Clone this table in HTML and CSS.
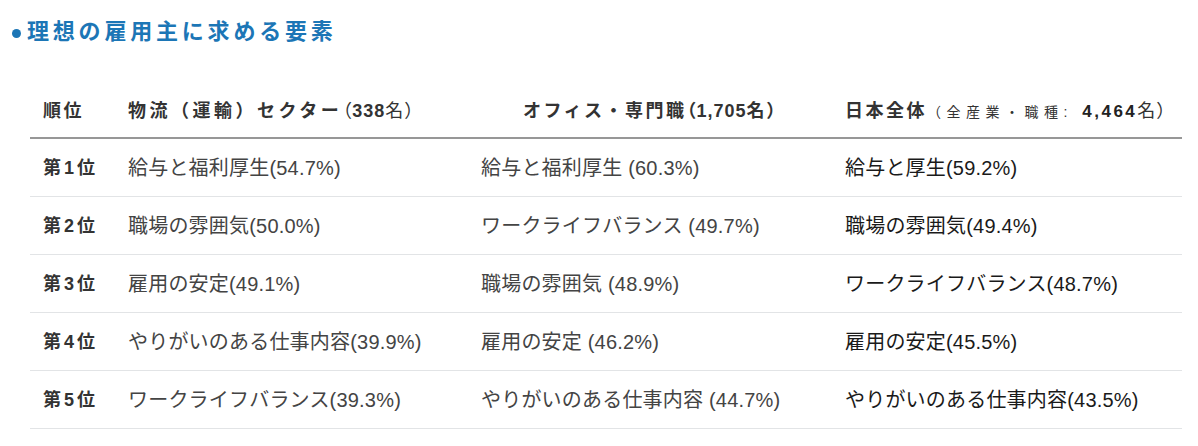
FILE: index.html
```html
<!DOCTYPE html>
<html lang="ja">
<head>
<meta charset="utf-8">
<title>理想の雇用主に求める要素</title>
<link rel="stylesheet" href="styles.css">
</head>
<body>
<div class="page">
  <h2 class="title"><span class="dot"></span>理想の雇用主に求める要素</h2>
  <div class="table">
    <div class="row head">
      <div class="cell">順位</div>
      <div class="cell wide">物流（運輸）セクター<span class="open thin">（</span><b class="n1">338</b><span class="thin">名）</span></div>
      <div class="cell center">オフィス・専門職<span class="open">（</span><b class="n2">1,705</b>名<span class="close">）</span></div>
      <div class="cell">日本全体<span class="small">（全産業・職種: </span><b class="n3">4,464</b><span class="thin">名）</span></div>
    </div>
    <div class="row">
      <div class="cell rank">第<span class="num">1</span>位</div>
      <div class="cell c1">給与と福利厚生(54.7%)</div>
      <div class="cell c2">給与と福利厚生 (60.3%)</div>
      <div class="cell c3">給与と厚生(59.2%)</div>
    </div>
    <div class="row">
      <div class="cell rank">第<span class="num">2</span>位</div>
      <div class="cell c1">職場の雰囲気(50.0%)</div>
      <div class="cell c2">ワークライフバランス (49.7%)</div>
      <div class="cell c3">職場の雰囲気(49.4%)</div>
    </div>
    <div class="row">
      <div class="cell rank">第<span class="num">3</span>位</div>
      <div class="cell c1">雇用の安定(49.1%)</div>
      <div class="cell c2">職場の雰囲気 (48.9%)</div>
      <div class="cell c3">ワークライフバランス(48.7%)</div>
    </div>
    <div class="row">
      <div class="cell rank">第<span class="num">4</span>位</div>
      <div class="cell c1">やりがいのある仕事内容(39.9%)</div>
      <div class="cell c2">雇用の安定 (46.2%)</div>
      <div class="cell c3">雇用の安定(45.5%)</div>
    </div>
    <div class="row">
      <div class="cell rank">第<span class="num">5</span>位</div>
      <div class="cell c1">ワークライフバランス(39.3%)</div>
      <div class="cell c2">やりがいのある仕事内容 (44.7%)</div>
      <div class="cell c3">やりがいのある仕事内容(43.5%)</div>
    </div>
  </div>
</div>
</body>
</html>
```

FILE: styles.css
```css
* { box-sizing: border-box; }
html, body {
  margin: 0;
  padding: 0;
  background: #fff;
}
body {
  font-family: "Liberation Sans", Arial, "Noto Sans CJK JP", sans-serif;
  color: #333;
}
.page {
  width: 1198px;
  height: 446px;
  overflow: hidden;
  padding-top: 17px;
}
.title {
  margin: 0 0 0 12px;
  display: flex;
  align-items: center;
  font-size: 22px;
  line-height: 30px;
  font-weight: bold;
  letter-spacing: 3.8px;
  color: #1c76b6;
}
.dot {
  width: 9px;
  height: 9px;
  border-radius: 50%;
  background: #1c76b6;
  margin-right: 6px;
  margin-top: 3px;
}
.table {
  margin: 34px 0 0 30px;
  width: 1152px;
}
.row {
  display: grid;
  grid-template-columns: 85px 353px 364px 350px;
  height: 58px;
  align-items: center;
  border-bottom: 1px solid #e2e4e6;
}
.row.head {
  border-bottom: 2px solid #979797;
  font-size: 18px;
  font-weight: bold;
  letter-spacing: 2.5px;
  color: #333;
  padding-top: 4px;
}
.cell {
  padding-left: 13px;
  white-space: nowrap;
  line-height: 24px;
}
.cell.wide {
  letter-spacing: 3.5px;
}
.cell.center {
  text-align: center;
  padding-left: 0;
  padding-right: 0;
}
.open, .close {
  font-feature-settings: "palt";
  letter-spacing: 1px;
}
.thin {
  font-weight: normal;
  letter-spacing: 1px;
}
.small {
  font-weight: normal;
  font-size: 14px;
  letter-spacing: 5.5px;
}
.n1 {
  font-size: 18px;
  letter-spacing: 1px;
}
.n2 {
  letter-spacing: 1px;
}
.n3 {
  font-size: 17px;
  letter-spacing: 2.5px;
  color: #222;
}
.rank {
  font-size: 18px;
  font-weight: bold;
  color: #333;
}
.rank .num {
  margin: 0 3px;
}
.c1, .c2, .c3 {
  font-size: 20px;
  letter-spacing: 0.2px;
}
.c1, .c2 {
  color: #444;
}
.c3 {
  color: #1a1a1a;
}
```
